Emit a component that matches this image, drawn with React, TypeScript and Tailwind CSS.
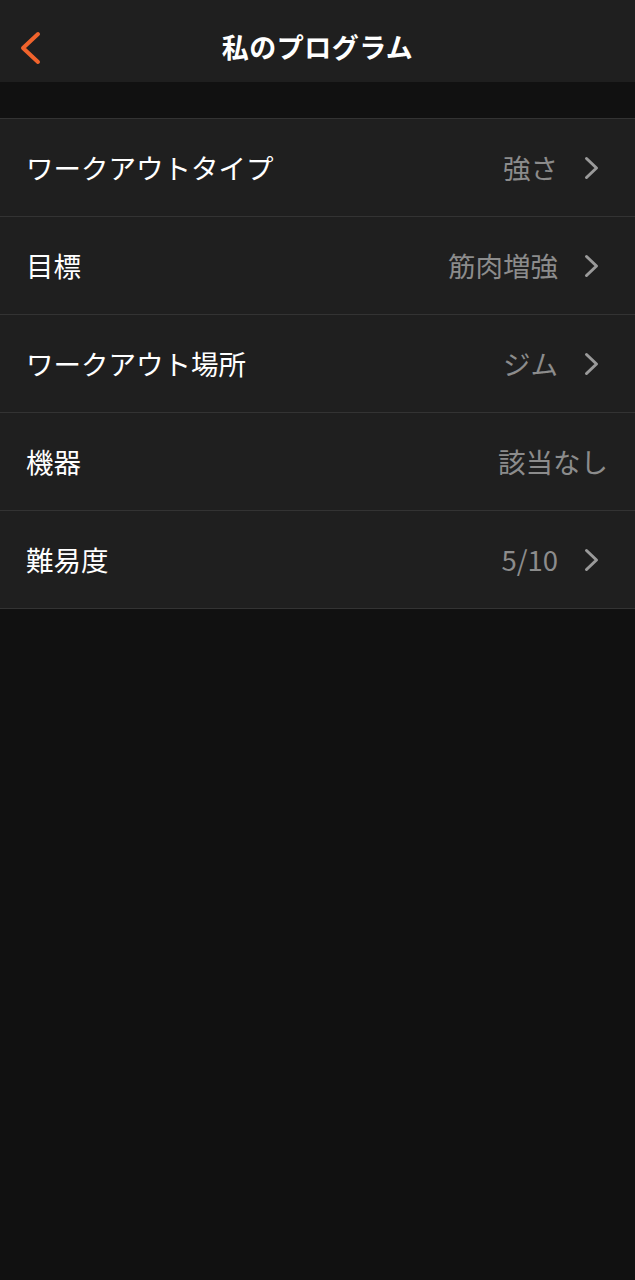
import { JSX } from 'react';

interface Row {
  label: string;
  value: string;
  chevron: boolean;
}

const rows: Row[] = [
  { label: 'ワークアウトタイプ', value: '強さ', chevron: true },
  { label: '目標', value: '筋肉増強', chevron: true },
  { label: 'ワークアウト場所', value: 'ジム', chevron: true },
  { label: '機器', value: '該当なし', chevron: false },
  { label: '難易度', value: '5/10', chevron: true },
];

function Chevron({ className }: { className: string }) {
  return (
    <svg className={className} viewBox="0 0 15 24" fill="none" stroke="currentColor" strokeWidth={3} strokeLinecap="round" strokeLinejoin="round">
      <path d="M2.5 2.5l10 9.5-10 9.5" />
    </svg>
  );
}

export default function App(): JSX.Element {
  return (
    <div
      className="min-h-[1280px] bg-[#111111] text-white"
      style={{ fontFamily: '"Noto Sans CJK JP", "Noto Sans", sans-serif' }}
    >
      {/* Header */}
      <div className="relative h-[82px] bg-[#1f1f1f] flex items-center justify-center">
        <button className="absolute left-[18px] top-[30px] text-[#f0632c]">
          <svg className="w-[24px] h-[36px]" viewBox="0 0 24 36" fill="none" stroke="currentColor" strokeWidth={4} strokeLinecap="round" strokeLinejoin="round">
            <path d="M20 4L5 18l15 14" />
          </svg>
        </button>
        <h1 className="text-[27px] font-bold tracking-[0.5px] mt-[12px]">私のプログラム</h1>
      </div>

      <div className="h-[36px]" />

      {/* List */}
      <div className="border-t border-[#333333]">
        {rows.map((row) => (
          <div
            key={row.label}
            className={`h-[98px] bg-[#1f1f1f] flex items-center pl-[26px] border-b border-[#333333] ${row.chevron ? 'pr-[36px]' : 'pr-[27px]'}`}
          >
            <span className="flex-1 text-[27.5px] text-white">{row.label}</span>
            <span className="text-[27.5px] text-[#8c8c8c]">{row.value}</span>
            {row.chevron && <Chevron className="ml-[26px] w-[15px] h-[24px] text-[#9a9a9a]" />}
          </div>
        ))}
      </div>
    </div>
  );
}
